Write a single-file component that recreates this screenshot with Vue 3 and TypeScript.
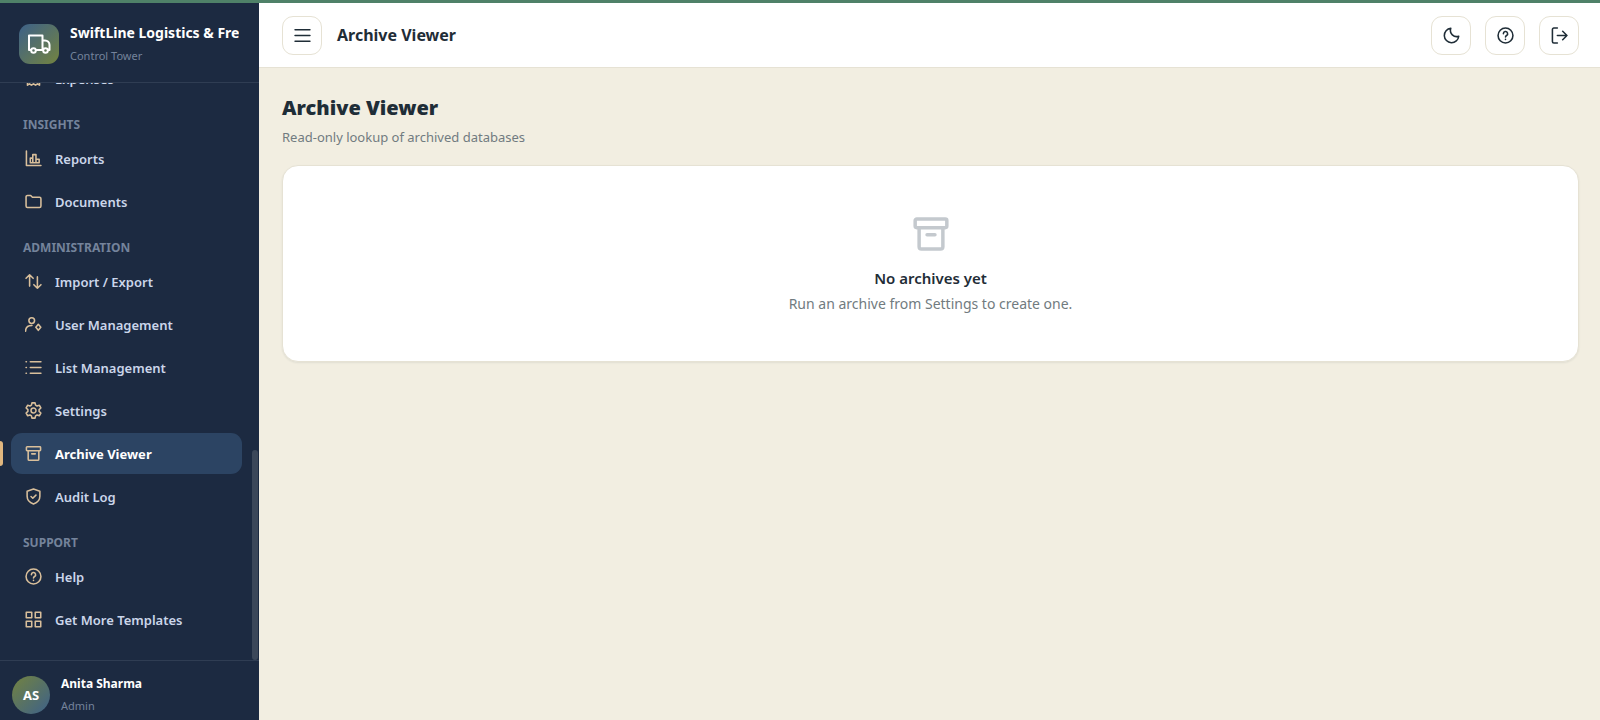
<script setup lang="ts">
interface NavItem {
  label: string
  icon: string
  active?: boolean
}
interface NavGroup {
  title?: string
  items: NavItem[]
}

// Outline icons on a 24-unit grid
const icons: Record<string, string> = {
  truck:
    'M4.2 18H2V3.500h13.500V18M8.800 18h7.400M15.500 8.500h2.500a4.500 4.500 0 0 1 4.500 4.500v5H20.800M8.800 18.500a2.300 2.300 0 1 1-4.600 0a2.300 2.300 0 1 1 4.600 0M20.800 18.500a2.300 2.300 0 1 1-4.600 0a2.300 2.300 0 1 1 4.600 0',
  receipt: 'M3.500 21.500V3h17v18.500l-2.800-2-2.800 2-2.900-2-2.900 2-2.800-2zM8 8h8M8 13h8',
  chart: 'M2 1.500v20.500h20.500M7.500 11.500h3.500v6.500H7.500zM11 6.500h4.500v11.500H11zM15.500 13h4.500v5h-4.500z',
  folder: 'M1.500 18.500v-13a2 2 0 0 1 2-2h4.500l2.500 2.500h10a2 2 0 0 1 2 2v10.500a2 2 0 0 1-2 2h-17a2 2 0 0 1-2-2z',
  arrows: 'M6.500 18.500V2.500M1.500 7.500l5-5 5 5M17.500 5.500v16M12.500 16.500l5 5 5-5',
  user: 'M13.500 6.500a4 4 0 1 1-8 0a4 4 0 1 1 8 0M.8 21.500c0-5.500 3.500-8 9-8M18.800 11.800l3.500 4.200-3.500 4.200-3.500-4.200z',
  list: 'M7.500 4H22.500M7.500 12H22.500M7.500 20H22.500M1.500 4h.5M1.500 12h.5M1.500 20h.5',
  gear:
    'M9.800 1.200h4.400l.7 3.300 2.100 1.200 3.200-1.100 2.200 3.800-2.500 2.300v2.600l2.500 2.300-2.200 3.800-3.200-1.100-2.100 1.200-.7 3.300H9.800l-.7-3.300L7 18.300l-3.200 1.100-2.200-3.800 2.500-2.300v-2.600L1.600 8.400l2.200-3.800L7 5.700l2.100-1.200zM15.500 12a3.500 3.500 0 1 1-7 0a3.500 3.500 0 1 1 7 0',
  archive:
    'M3 2.500h18a1 1 0 0 1 1 1v3.500a1 1 0 0 1-1 1H3a1 1 0 0 1-1-1V3.500a1 1 0 0 1 1-1zM4.500 8v12a1.500 1.500 0 0 0 1.500 1.500h12a1.500 1.500 0 0 0 1.500-1.500V8M9.500 12.500h5',
  shield: 'M12 1.500 21 4.500v7c0 5.500-3.500 9-9 11-5.500-2-9-5.500-9-11v-7zM8.500 12l2.500 2.500 4.500-4.500',
  help: 'M22.500 12a10.500 10.500 0 1 1-21 0a10.500 10.500 0 1 1 21 0M9 9.500a3 3 0 1 1 4.500 2.500c-1 .6-1.500 1-1.500 2M12 17.300v.4',
  grid: 'M1.800 1.800h7.700v7.700H1.800zM14.500 1.800h7.700v7.700h-7.700zM1.800 14.500h7.700v7.700H1.800zM14.500 14.500h7.700v7.700h-7.700z',
  menu: 'M1.500 4h21M1.500 12h21M1.500 20h21',
  moon: 'M11 1.800A10.200 10.200 0 1 0 22.200 13C15.500 15.500 8.500 9 11 1.800z',
  logout: 'M9 1.500H4a2 2 0 0 0-2 2v17a2 2 0 0 0 2 2H9M9 12h13.500M16.500 6l6 6-6 6',
}

const groups: NavGroup[] = [
  { items: [{ label: 'Expenses', icon: 'receipt' }] },
  {
    title: 'Insights',
    items: [
      { label: 'Reports', icon: 'chart' },
      { label: 'Documents', icon: 'folder' },
    ],
  },
  {
    title: 'Administration',
    items: [
      { label: 'Import / Export', icon: 'arrows' },
      { label: 'User Management', icon: 'user' },
      { label: 'List Management', icon: 'list' },
      { label: 'Settings', icon: 'gear' },
      { label: 'Archive Viewer', icon: 'archive', active: true },
      { label: 'Audit Log', icon: 'shield' },
    ],
  },
  {
    title: 'Support',
    items: [
      { label: 'Help', icon: 'help' },
      { label: 'Get More Templates', icon: 'grid' },
    ],
  },
]

const actions = [
  { label: 'Toggle dark mode', icon: 'moon' },
  { label: 'Help', icon: 'help' },
  { label: 'Sign out', icon: 'logout' },
]
</script>

<template>
  <div class="app">
    <aside class="sidebar">
      <div class="brand">
        <span class="logo">
          <svg class="icon brand-icon" viewBox="0 0 24 24" aria-hidden="true"><path :d="icons.truck" /></svg>
        </span>
        <div class="brand-text">
          <div class="brand-name">SwiftLine Logistics &amp; Fre</div>
          <div class="brand-sub">Control Tower</div>
        </div>
      </div>

      <nav class="nav" aria-label="Main">
        <div v-for="(group, i) in groups" :key="i" class="group">
          <div v-if="group.title" class="group-title">{{ group.title }}</div>
          <a
            v-for="item in group.items"
            :key="item.label"
            href="#"
            class="nav-link"
            :class="{ active: item.active }"
            :aria-current="item.active ? 'page' : undefined"
          >
            <svg class="icon" viewBox="0 0 24 24" aria-hidden="true"><path :d="icons[item.icon]" /></svg>
            <span>{{ item.label }}</span>
          </a>
        </div>
        <span class="scroll-thumb" aria-hidden="true"></span>
      </nav>

      <div class="account">
        <span class="avatar">AS</span>
        <div>
          <div class="account-name">Anita Sharma</div>
          <div class="account-role">Admin</div>
        </div>
      </div>
    </aside>

    <div class="content">
      <header class="topbar">
        <button type="button" class="icon-button" aria-label="Toggle menu">
          <svg class="icon" viewBox="0 0 24 24" aria-hidden="true"><path :d="icons.menu" /></svg>
        </button>
        <div class="topbar-title">Archive Viewer</div>
        <div class="actions">
          <button v-for="a in actions" :key="a.label" type="button" class="icon-button" :aria-label="a.label">
            <svg class="icon" viewBox="0 0 24 24" aria-hidden="true"><path :d="icons[a.icon]" /></svg>
          </button>
        </div>
      </header>

      <main class="page">
        <h1>Archive Viewer</h1>
        <p class="lead">Read-only lookup of archived databases</p>
        <section class="card">
          <svg class="icon empty-icon" viewBox="0 0 24 24" aria-hidden="true"><path :d="icons.archive" /></svg>
          <h2>No archives yet</h2>
          <p>Run an archive from Settings to create one.</p>
        </section>
      </main>
    </div>
  </div>
</template>

<style>
body {
  margin: 0;
}
</style>

<style scoped>
.app {
  display: flex;
  height: 100vh;
  box-sizing: border-box;
  border-top: 3px solid #4f8168;
  background: #f2eee1;
  color: #1f2d37;
  font-family: "Noto Sans", "Open Sans", sans-serif;
  overflow: hidden;
}
.icon {
  width: 17px;
  height: 17px;
  flex: none;
  fill: none;
  stroke: currentColor;
  stroke-width: 2.2;
  stroke-linecap: round;
  stroke-linejoin: round;
}
.sidebar {
  display: flex;
  flex-direction: column;
  flex: none;
  width: 259px;
  background: #1c2a41;
}
.brand {
  display: flex;
  align-items: center;
  gap: 11px;
  height: 77px;
  padding: 2px 19px 0;
  border-bottom: 1px solid #2f3d53;
}
.logo {
  display: grid;
  place-items: center;
  flex: none;
  width: 40px;
  height: 40px;
  border-radius: 11px;
  background: linear-gradient(135deg, #3d6189, #738340);
  color: #fff;
}
.brand-icon {
  width: 24px;
  height: 24px;
  stroke-width: 2;
}
.brand-text {
  min-width: 0;
  overflow: hidden;
  white-space: nowrap;
}
.brand-name {
  color: #fff;
  font-size: 14px;
  font-weight: 700;
  line-height: 24px;
}
.brand-sub {
  color: #74839b;
  font-size: 11px;
  line-height: 22px;
}
.nav {
  position: relative;
  display: flex;
  flex: 1;
  flex-direction: column;
  justify-content: flex-end;
  min-height: 0;
  padding: 0 17px 18px 11px;
  overflow: hidden;
}
.group {
  flex: none;
}
.group-title {
  padding: 15px 12px 5px;
  color: #74839b;
  font-size: 12px;
  font-weight: 700;
  line-height: 17px;
  text-transform: uppercase;
}
.nav-link {
  display: flex;
  align-items: center;
  gap: 13px;
  height: 41px;
  margin-bottom: 2px;
  padding: 0 14px;
  border-radius: 11px;
  color: #cbd6ea;
  font-size: 13px;
  font-weight: 600;
  text-decoration: none;
}
.nav-link .icon {
  color: #d9bf9b;
}
.nav-link.active {
  position: relative;
  background: #2c4463;
  color: #fff;
  font-weight: 700;
}
.nav-link.active::before {
  position: absolute;
  top: 8px;
  bottom: 8px;
  left: -11px;
  width: 3px;
  border-radius: 0 3px 3px 0;
  background: #e0b67e;
  content: "";
}
.scroll-thumb {
  position: absolute;
  right: 1px;
  bottom: 0;
  width: 6px;
  height: 210px;
  border-radius: 3px;
  background: #3b4759;
}
.account {
  display: flex;
  align-items: center;
  gap: 11px;
  padding: 12px 12px 3px;
  border-top: 1px solid #2f3d53;
}
.avatar {
  display: grid;
  place-items: center;
  width: 38px;
  height: 38px;
  border-radius: 50%;
  background: linear-gradient(135deg, #738340, #3d6189);
  color: #fff;
  font-size: 13px;
  font-weight: 700;
}
.account-name {
  color: #fff;
  font-size: 12px;
  font-weight: 700;
  line-height: 22px;
}
.account-role {
  color: #74839b;
  font-size: 11px;
  line-height: 22px;
}
.content {
  display: flex;
  flex: 1;
  flex-direction: column;
  min-width: 0;
}
.topbar {
  display: flex;
  align-items: center;
  gap: 15px;
  height: 64px;
  padding: 0 21px 0 23px;
  border-bottom: 1px solid #e6e2d4;
  background: #fff;
}
.icon-button {
  display: grid;
  place-items: center;
  width: 40px;
  height: 39px;
  padding: 0;
  border: 1px solid #e6e2d4;
  border-radius: 11px;
  background: #fff;
  color: #1f2d37;
  cursor: pointer;
}
.topbar-title {
  font-size: 16px;
  font-weight: 700;
}
.actions {
  display: flex;
  gap: 14px;
  margin-left: auto;
}
.page {
  padding: 25px 21px 25px 23px;
}
h1 {
  margin: 0;
  font-size: 20px;
  font-weight: 900;
  line-height: 30px;
}
.lead {
  margin: 4px 0 18px;
  color: #717b80;
  font-size: 13px;
  line-height: 20px;
}
.card {
  display: flex;
  flex-direction: column;
  align-items: center;
  padding: 49px 24px 44px;
  border: 1px solid #e6e2d4;
  border-radius: 16px;
  background: #fff;
  box-shadow: 0 1px 2px rgb(31 45 55 / 8%);
}
.empty-icon {
  width: 38px;
  height: 38px;
  color: #c4c9ce;
}
.card h2 {
  margin: 12px 0 0;
  font-size: 15px;
  font-weight: 600;
  line-height: 26px;
}
.card p {
  margin: 0;
  color: #717b80;
  font-size: 14px;
  line-height: 26px;
}
</style>
